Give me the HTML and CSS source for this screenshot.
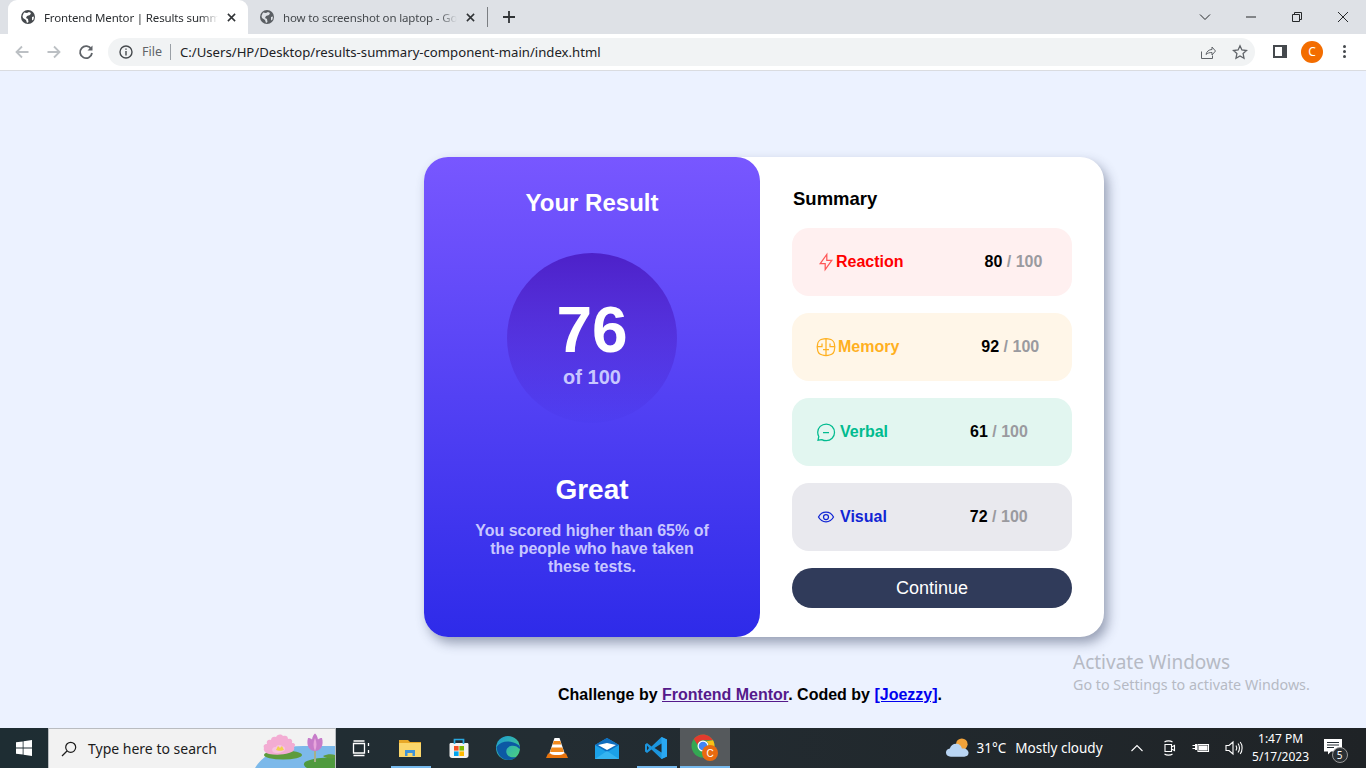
FILE: index.html
```html
<!DOCTYPE html>
<html lang="en">
<head>
  <meta charset="UTF-8" />
  <title>Frontend Mentor | Results summary component</title>
  <link rel="stylesheet" href="styles.css">
</head>
<body>
  <header class="chrome">
    <div class="tabstrip">
      <div class="tab tab-active">
        <svg class="globe" viewBox="0 0 16 16"><circle cx="8" cy="8" r="7" fill="#45494d"/><path d="M4 3.500l3 .5 2-1 2 1-1 2-3 1-1 2 2 1 .5 3-1.500 1-1-3-3-2-.5-2zM12 8l2-.5-.5 3-1.500 1z" fill="#fff"/></svg>
        <span class="tab-title">Frontend Mentor | Results summary</span>
        <svg class="tab-x" viewBox="0 0 10 10"><path d="M1 1l8 8M9 1l-8 8"/></svg>
      </div>
      <div class="tab">
        <svg class="globe" viewBox="0 0 16 16"><circle cx="8" cy="8" r="7" fill="#5a5e63"/><path d="M4 3.500l3 .5 2-1 2 1-1 2-3 1-1 2 2 1 .5 3-1.500 1-1-3-3-2-.5-2zM12 8l2-.5-.5 3-1.500 1z" fill="#dee1e6"/></svg>
        <span class="tab-title">how to screenshot on laptop - Google</span>
        <svg class="tab-x" viewBox="0 0 10 10"><path d="M1 1l8 8M9 1l-8 8"/></svg>
      </div>
      <span class="tab-sep"></span>
      <svg class="new-tab" viewBox="0 0 12 12"><path d="M6 0v12M0 6h12"/></svg>
      <div class="win-controls">
        <svg viewBox="0 0 12 12"><path d="M1 3.500l5 5 5-5"/></svg>
        <svg viewBox="0 0 12 12"><path d="M1 6h10"/></svg>
        <svg viewBox="0 0 12 12"><path d="M1.500 3.500h7v7h-7zM3.500 3.500v-2h7v7h-2"/></svg>
        <svg viewBox="0 0 12 12"><path d="M1 1l10 10M11 1l-10 10"/></svg>
      </div>
    </div>
    <div class="toolbar">
      <svg class="nav-icon nav-off" viewBox="0 0 16 16"><path d="M14.500 8h-12M8 2.500L2.500 8 8 13.500"/></svg>
      <svg class="nav-icon nav-off" viewBox="0 0 16 16"><path d="M1.500 8h12M8 2.500L13.500 8 8 13.500"/></svg>
      <svg class="nav-icon" viewBox="0 0 16 16"><path d="M13.300 5.200A6 6 0 1 0 14 9"/><path class="solid" d="M14.500 1.500v5h-5z"/></svg>
      <div class="omnibox">
        <svg class="info" viewBox="0 0 14 14"><circle cx="7" cy="7" r="6"/><path d="M7 6v4.500M7 3.500v1.300"/></svg>
        <span class="file-label">File</span>
        <span class="omni-sep"></span>
        <span class="url">C:/Users/HP/Desktop/results-summary-component-main/index.html</span>
        <svg class="omni-icon share" viewBox="0 0 16 16"><path d="M1.500 7.500v7h11v-3M6 10.500c.5-3 3-5 6-5V3l3.500 4-3.500 4V8.500c-2.500 0-4.500.5-6 2z"/></svg>
        <svg class="omni-icon star" viewBox="0 0 16 16"><path d="M8 1.800l1.900 4.200 4.600.5-3.400 3.100.9 4.600L8 11.900l-4 2.300.9-4.600L1.500 6.500 6.100 6z"/></svg>
      </div>
      <span class="side-panel"></span>
      <span class="avatar">C</span>
      <span class="dots"><i></i><i></i><i></i></span>
    </div>
  </header>

  <main class="page">
    <section class="card">
      <div class="result">
        <h2 class="result-title">Your Result</h2>
        <div class="score-circle">
          <span class="score-num">76</span>
          <span class="score-of">of 100</span>
        </div>
        <h1 class="grade">Great</h1>
        <p class="blurb">You scored higher than 65% of the people who have taken these tests.</p>
      </div>
      <div class="summary">
        <h2 class="summary-title">Summary</h2>
        <div class="row row-reaction">
          <span class="cat">
            <svg viewBox="0 0 20 20"><path d="M10.800 8.300V2.500l-6.600 9.200h5v5.800l6.600-9.200z"/></svg>
            <span>Reaction</span>
          </span>
          <span class="val">80 <em>/ 100</em></span>
        </div>
        <div class="row row-memory">
          <span class="cat">
            <svg viewBox="0 0 20 20"><path d="M10 2v16M6.500 2.200C3.800 2.600 1.500 5 1.500 8c-.4 1.400-.4 3 0 4 0 3.500 2.500 5.500 5 6 1.300.5 2.500.5 3.500.5s2.200 0 3.500-.5c2.500-.5 5-2.500 5-6 .4-1 .4-2.600 0-4 0-3-2.300-5.400-5-5.800C12.300 1.500 11 1.500 10 1.500s-2.300 0-3.500.7zM1.600 9.500h4.400V6.500M18.400 9.500H14V6.500M10 12.500H7M10 12.500h3"/></svg>
            <span>Memory</span>
          </span>
          <span class="val">92 <em>/ 100</em></span>
        </div>
        <div class="row row-verbal">
          <span class="cat">
            <svg viewBox="0 0 20 20"><path d="M7 10.500h6M10.300 2C5.500 2 1.700 5.700 1.700 10.300c0 1.500.4 3 1.100 4.200l-.8 3.700 3.800-.6c1.300.7 2.900 1.100 4.500 1.100 4.600 0 8.200-3.700 8.200-8.300S14.900 2 10.300 2z"/></svg>
            <span>Verbal</span>
          </span>
          <span class="val">61 <em>/ 100</em></span>
        </div>
        <div class="row row-visual">
          <span class="cat">
            <svg viewBox="0 0 20 20"><path d="M2.500 10c1.700-3.200 4.300-4.800 7.500-4.800s5.800 1.600 7.500 4.800c-1.700 3.200-4.300 4.800-7.500 4.800S4.200 13.200 2.500 10z"/><circle cx="10" cy="10" r="2.500"/></svg>
            <span>Visual</span>
          </span>
          <span class="val">72 <em>/ 100</em></span>
        </div>
        <button class="continue">Continue</button>
      </div>
    </section>
    <footer class="attribution">
      Challenge by <a class="visited" href="#">Frontend Mentor</a>. Coded by <a href="#">[Joezzy]</a>.
    </footer>
    <div class="activate">
      <div class="activate-big">Activate Windows</div>
      <div class="activate-small">Go to Settings to activate Windows.</div>
    </div>
  </main>

  <footer class="taskbar">
    <div class="start">
      <svg viewBox="0 0 16 16"><path d="M0 2.300l6.700-.9v6.200H0zM7.500 1.300L16 0v7.600H7.500zM0 8.400h6.700v6.200L0 13.700zM7.500 8.400H16V16l-8.500-1.200z" fill="#fff"/></svg>
    </div>
    <div class="search">
      <svg class="search-icon" viewBox="0 0 16 16"><circle cx="9.700" cy="6.300" r="5"/><path d="M6 10L1 15"/></svg>
      <span class="search-text">Type here to search</span>
      <svg class="lily" viewBox="0 0 84 36">
        <path d="M4 36C12 22 30 14 52 14h32v22z" fill="#7cb9ea"/>
        <ellipse cx="32" cy="23" rx="19" ry="4.500" fill="#5e9b3c"/>
        <path d="M54 30c6-4 20-5 30-4v10H56c-3-2-4-4-2-6z" fill="#4f9a3e"/>
        <path d="M72 24c4-2 9-2 12-1v3c-5 1-10 0-12-2z" fill="#5e9b3c"/>
        <path d="M64 16v14" stroke="#a7b08a" stroke-width="2"/>
        <path d="M18 22c-4-1-6-4-5-6-1-2 0-4 3-4-1-3 1-5 4-4 0-3 3-4 5-3 2-3 5-3 7-1 3-1 5 0 5 3 3-1 5 1 4 4 3 0 4 2 2 4 1 3-1 5-5 6-6 2-14 2-20 1z" fill="#f3acd3"/>
        <path d="M22 20c-2-3 0-5 3-5 0-2 5-3 6-1 3 0 4 3 2 5-3 2-8 3-11 1z" fill="#f7c4e0"/>
        <path d="M25 18l2-4 2 2 2-2 2 4c-2 1-6 1-8 0z" fill="#f1d14f"/>
        <path d="M64 19c-6 0-9-6-7-13 2 0 3 .5 4 1.500 .5-3 2-5.500 3-6 1 .5 2.500 3 3 6 1-1 2-1.500 4-1.500 2 7-1 13-7 13z" fill="#c77cc9"/>
        <path d="M64 19c-2-4-2-9 0-13 2 4 2 9 0 13z" fill="#e8a6dc"/>
      </svg>
    </div>
    <div class="task-icons">
      <div class="task">
        <svg class="task-view" viewBox="0 0 24 24"><path d="M4.500 5h11M4.500 19.500h11M4.500 7.500h11v9.500h-11zM19.500 7v3M19.500 14v3"/></svg>
      </div>
      <div class="task task-open">
        <svg viewBox="0 0 24 24"><path d="M1 4h9l2 2h11v3H1z" fill="#e8a828"/><path d="M1 7h22v14H1z" fill="#fbd66b"/><path d="M7 20v-6h10v6h-2.500v-3h-5v3z" fill="#3f93d8"/></svg>
      </div>
      <div class="task">
        <svg viewBox="0 0 24 24"><path d="M4 7h16c1 0 1.500.5 1.500 1.500v11c0 1.500-1 2.500-2.500 2.500H5c-1.500 0-2.500-1-2.500-2.500v-11C2.500 7.500 3 7 4 7z" fill="#f2f2f2"/><path d="M7.500 8V3.500h9V8" fill="none" stroke="#2aa8e0" stroke-width="1.700"/><path d="M7 10h4.600v4.600H7z" fill="#f25022"/><path d="M12.400 10H17v4.600h-4.600z" fill="#7fba00"/><path d="M7 15.400h4.600V20H7z" fill="#00a4ef"/><path d="M12.400 15.400H17V20h-4.600z" fill="#ffb900"/></svg>
      </div>
      <div class="task">
        <svg viewBox="0 0 24 24"><defs><linearGradient id="edgeTop" x1="0" y1="0" x2="1" y2="1"><stop offset="0" stop-color="#1a9ad8"/><stop offset="1" stop-color="#4fd37a"/></linearGradient></defs><circle cx="12" cy="12" r="12" fill="url(#edgeTop)"/><path d="M.5 11c.5 7 5 13 12 13 3 0 6-1 8-3-4 1-9 0-10-4-1-3 1-6 4-7 3-1 7 0 9 3 1-1 .5-3-1-4-7-5-17-5-22 2z" fill="#0c59a4"/></svg>
      </div>
      <div class="task">
        <svg viewBox="0 0 24 24"><path d="M9.500 2h5l6 18h-17z" fill="#fff"/><path d="M8.700 5h6.600l1 3.500H7.700zM6.500 11.500h11l1.300 4.500H5.200z" fill="#f18a1e"/><path d="M3 17.500h2.500c1 2 12 2 13 0H21l2 4.500H1z" fill="#e8730c"/></svg>
      </div>
      <div class="task">
        <svg viewBox="0 0 24 24"><path d="M0 9l12-7 12 7v14H0z" fill="#1ba1e8"/><path d="M0 9l12-7 12 7-12 7z" fill="#0f6cbd"/><path d="M3 9l9-2 9 2-9 5z" fill="#fff"/><path d="M0 23l12-8 12 8z" fill="#35b4f0"/></svg>
      </div>
      <div class="task task-open">
        <svg viewBox="0 0 24 24"><path d="M17.500 1L7.500 10.500 3 7 1 8.500v7L3 17l4.500-3.500 10 9.500L23 20.500v-17z" fill="#1c95dd"/><path d="M17.500 1L23 3.500v17L17.500 23z" fill="#2aa8f2"/><path d="M17.500 7.500L10.500 12l7 4.500z" fill="#202a30"/><path d="M3 9.500L5 12l-2 2.500z" fill="#202a30"/></svg>
      </div>
      <div class="task task-active">
        <svg viewBox="0 0 28 28"><circle cx="12" cy="12" r="11.500" fill="#34a853"/><path d="M12 .5c4.300 0 8 2.400 10 5.800H12c-2.800 0-5 2-5.500 4.500L2.800 5C5 2.200 8.300.5 12 .5z" fill="#e33b2e"/><path d="M22 6.300c1 1.700 1.500 3.600 1.500 5.700 0 6.300-5 11.400-11.300 11.500l4.300-7.500c.8-1 1.200-2.400 1.200-4 0-2-.9-3.700-2.300-4.700z" fill="#fbc116"/><circle cx="12" cy="12" r="5.500" fill="#fff"/><circle cx="12" cy="12" r="4.300" fill="#4285f4"/><circle cx="19" cy="19" r="8" fill="#e86a10"/><text class="badge-c" x="19" y="22.500" text-anchor="middle">C</text></svg>
      </div>
    </div>
    <div class="tray">
      <svg class="weather" viewBox="0 0 26 24"><circle cx="17.500" cy="8" r="6" fill="#f2a33a"/><path d="M6 21c-3 0-5-1.800-5-4.300 0-2.300 1.800-4 4-4.200C6 9.500 8.500 7.500 11.500 7.500c3.200 0 5.700 2.200 6 5 .5 0 1-.1 1.500-.1 3 0 5.500 1.900 5.500 4.600S22.500 21 20 21z" fill="#b9d5f3"/></svg>
      <span class="temp">31°C</span>
      <span class="forecast">Mostly cloudy</span>
      <svg class="tray-icon caret" viewBox="0 0 14 14"><path d="M1.500 10L7 4.500 12.500 10"/></svg>
      <svg class="tray-icon meet" viewBox="0 0 16 16"><path d="M4 4.500h6.500v7H4zM10.500 7l3-1.500v5L10.500 9M3.500 2c2-1.500 6-1.500 8 0M3.500 14c2 1.500 6 1.500 8 0"/></svg>
      <svg class="tray-icon power" viewBox="0 0 18 14"><path d="M6 3.500h10.500v7H6zM.5 4.500h2.500M.5 7.500h2.500"/><path class="solid" d="M7 4.500h8.500v5H7zM3 3h2v6H3z"/></svg>
      <svg class="tray-icon volume" viewBox="0 0 18 16"><path d="M1 5.500h3l4-3.500v12l-4-3.500H1zM11 5.500c1 1.500 1 3.500 0 5M13 3.500c2 2.500 2 6.500 0 9M15.200 2c2.500 3 2.500 9 0 12"/></svg>
      <div class="clock"><span>1:47 PM</span><span>5/17/2023</span></div>
      <div class="notify">
        <svg viewBox="0 0 18 16"><path d="M0 0h18v12.500H7L4 15.500v-3H0z" fill="#fff"/><path d="M3 3.500h12M3 6h12M3 8.500h7" stroke="#222b31"/></svg>
        <span class="notify-count">5</span>
      </div>
    </div>
  </footer>
</body>
</html>
```

FILE: styles.css
```css
* {
  box-sizing: border-box;
}
html, body {
  margin: 0;
  height: 100%;
}
body {
  display: flex;
  flex-direction: column;
  height: 768px;
  overflow: hidden;
  background: #ecf2ff;
  font-family: "Liberation Sans", Arial, sans-serif;
}

/* browser frame */
.chrome {
  font-family: "Noto Sans", "Open Sans", sans-serif;
  color: #202124;
}
.tabstrip {
  display: flex;
  align-items: center;
  height: 34px;
  padding-left: 8px;
  background: #dee1e6;
}
.tab {
  display: flex;
  align-items: center;
  width: 240px;
  height: 34px;
  padding: 0 12px;
  font-size: 11.500px;
  letter-spacing: -0.15px;
  color: #45494d;
}
.tab + .tab {
  margin-left: -1px;
}
.tab-active {
  background: #fff;
  border-radius: 9px 9px 0 0;
  color: #2b2e31;
}
.globe {
  width: 16px;
  height: 16px;
  flex: none;
}
.tab-title {
  flex: 1;
  margin: 0 9px 0 8px;
  overflow: hidden;
  white-space: nowrap;
  -webkit-mask-image: linear-gradient(to right, #000 90%, transparent);
  mask-image: linear-gradient(to right, #000 90%, transparent);
}
.tab-x {
  width: 9px;
  height: 9px;
  flex: none;
  fill: none;
  stroke: #303336;
  stroke-width: 1.700;
}
.tab-sep {
  width: 1px;
  height: 20px;
  background: #7b7e82;
}
.new-tab {
  width: 12px;
  height: 12px;
  margin-left: 15px;
  fill: none;
  stroke: #303336;
  stroke-width: 1.800;
}
.win-controls {
  display: flex;
  align-items: center;
  gap: 34px;
  margin-left: auto;
  padding-right: 17px;
}
.win-controls svg {
  width: 12px;
  height: 12px;
  fill: none;
  stroke: #26282a;
  stroke-width: 1;
}
.toolbar {
  display: flex;
  align-items: center;
  height: 37px;
  padding: 0 0 1px 14px;
  background: #fff;
  border-bottom: 1px solid #dadce0;
}
.nav-icon {
  width: 16px;
  height: 16px;
  margin-right: 16px;
  fill: none;
  stroke: #5f6368;
  stroke-width: 1.800;
}
.nav-icon .solid {
  fill: #5f6368;
  stroke: none;
}
.nav-off {
  stroke: #bcc0c4;
}
.omnibox {
  display: flex;
  align-items: center;
  width: 1147px;
  height: 28px;
  margin-left: -2px;
  padding: 0 7px 0 11px;
  border-radius: 14px;
  background: #f1f3f4;
}
.info {
  width: 14px;
  height: 14px;
  fill: none;
  stroke: #45494d;
  stroke-width: 1.400;
}
.file-label {
  margin-left: 9px;
  font-size: 12.500px;
  color: #5f6368;
}
.omni-sep {
  width: 1px;
  height: 16px;
  margin: 0 9px 0 8px;
  background: #9aa0a6;
}
.url {
  font-size: 13.150px;
  color: #202124;
}
.omni-icon {
  width: 16px;
  height: 16px;
  fill: none;
  stroke: #5f6368;
  stroke-width: 1.300;
}
.share {
  margin-left: auto;
  margin-right: 16px;
  stroke-width: 1;
}
.side-panel {
  width: 14px;
  height: 13px;
  margin-left: 18px;
  border: 2px solid #45494d;
  border-right-width: 5px;
}
.avatar {
  display: flex;
  align-items: center;
  justify-content: center;
  width: 22px;
  height: 22px;
  margin-left: 14px;
  border-radius: 50%;
  background: #f36d00;
  color: #fff;
  font-size: 12px;
}
.dots {
  display: flex;
  flex-direction: column;
  gap: 2px;
  margin-left: 20px;
}
.dots i {
  width: 3px;
  height: 3px;
  border-radius: 50%;
  background: #45494d;
}

/* results card */
.page {
  position: relative;
  flex: 1;
  padding: 86px 0 0 424px;
}
.card {
  display: flex;
  width: 680px;
  height: 480px;
  border-radius: 24px;
  background: #fff;
  box-shadow: 4px 6px 12px rgba(48, 59, 90, 0.45);
}
.result {
  display: flex;
  flex-direction: column;
  align-items: center;
  width: 336px;
  padding-top: 32px;
  border-radius: 24px;
  background: linear-gradient(to bottom, #7857ff, #2e2be9);
  color: #fff;
  text-align: center;
}
.result-title {
  margin: 0;
  font-size: 24px;
  line-height: 28px;
}
.score-circle {
  display: flex;
  flex-direction: column;
  align-items: center;
  width: 170px;
  height: 170px;
  margin-top: 36px;
  padding-top: 43px;
  border-radius: 50%;
  background: linear-gradient(to bottom, #4d21c9, rgba(37, 33, 201, 0.04));
}
.score-num {
  font-size: 64px;
  font-weight: bold;
  line-height: 68px;
}
.score-of {
  margin-top: 1px;
  font-size: 20px;
  font-weight: bold;
  line-height: 24px;
  color: #c8c7ff;
}
.grade {
  margin: 51px 0 0;
  font-size: 28px;
  line-height: 32px;
}
.blurb {
  width: 240px;
  margin: 16px 0 0;
  font-size: 16px;
  font-weight: bold;
  line-height: 18px;
  color: #c8c7ff;
}
.summary {
  flex: 1;
  padding: 31px 32px 0;
}
.summary-title {
  margin: 0 0 18px;
  padding-left: 1px;
  font-size: 18.500px;
  line-height: 22px;
  color: #000;
}
.row {
  display: flex;
  align-items: center;
  gap: 82px;
  height: 68px;
  margin-bottom: 17px;
  padding-left: 24px;
  border-radius: 17px;
  font-size: 16px;
  font-weight: bold;
}
.cat {
  display: flex;
  align-items: center;
}
.cat svg {
  width: 20px;
  height: 20px;
  fill: none;
  stroke: currentColor;
  stroke-width: 1.250;
}
.val {
  color: #000;
}
.val em {
  font-style: normal;
  color: #9a9a9f;
}
.row-reaction {
  gap: 81px;
  background: #fff0f0;
  color: #ff0000;
}
.row-reaction svg {
  stroke: #ff5757;
}
.row-memory {
  background: #fff6e8;
  color: #ffb01f;
}
.row-memory .cat {
  gap: 2px;
}
.row-verbal {
  background: #e2f6f0;
  color: #00bb8f;
}
.row-verbal .cat,
.row-visual .cat {
  gap: 4px;
}
.row-visual {
  gap: 83px;
  background: #e9e9ee;
  color: #1125d4;
}
.continue {
  display: block;
  width: 280px;
  height: 40px;
  padding: 0;
  border: none;
  border-radius: 20px;
  background: #303b5a;
  color: #fff;
  font-family: "Liberation Sans", Arial, sans-serif;
  font-size: 18px;
}
.attribution {
  width: 680px;
  margin-top: 49px;
  padding-right: 28px;
  font-size: 16px;
  font-weight: bold;
  line-height: 18px;
  text-align: center;
  color: #000;
}
.attribution a {
  color: #0000ee;
}
.attribution a.visited {
  color: #551a8b;
}
.activate {
  position: absolute;
  left: 1073px;
  top: 579px;
  font-family: "Noto Sans", "Open Sans", sans-serif;
  color: #b6bac4;
}
.activate-big {
  font-size: 19px;
  line-height: 24px;
}
.activate-small {
  font-size: 14.300px;
  line-height: 22px;
}

/* windows taskbar */
.taskbar {
  display: flex;
  align-items: stretch;
  height: 40px;
  background: linear-gradient(to right, #1e2d33, #232d33 40%, #1f2326);
  color: #fff;
  font-family: "Noto Sans", "Open Sans", sans-serif;
}
.start {
  display: flex;
  align-items: center;
  justify-content: center;
  width: 48px;
}
.start svg {
  width: 16px;
  height: 16px;
}
.search {
  display: flex;
  align-items: center;
  width: 288px;
  padding-left: 12px;
  background: #f2f2f2;
  border: 1px solid #b9bcc0;
  border-bottom: none;
  color: #1c1c1c;
  position: relative;
  overflow: hidden;
}
.search-icon {
  width: 16px;
  height: 16px;
  fill: none;
  stroke: #1c1c1c;
  stroke-width: 1.200;
}
.search-text {
  margin-left: 11px;
  font-size: 14px;
}
.lily {
  position: absolute;
  right: 0;
  bottom: 0;
  width: 84px;
  height: 36px;
}
.task-icons {
  display: flex;
}
.task {
  position: relative;
  display: flex;
  align-items: center;
  justify-content: center;
  width: 49.200px;
}
.task svg {
  width: 24px;
  height: 24px;
}
.task-view {
  fill: none;
  stroke: #fff;
  stroke-width: 1.300;
}
.task-open::after {
  content: "";
  position: absolute;
  left: 6px;
  right: 3px;
  bottom: 0;
  height: 2px;
  background: #76b9ed;
}
.task-active {
  background: #55595c;
}
.task-active svg {
  width: 28px;
  height: 28px;
}
.task-active::after {
  content: "";
  position: absolute;
  left: 0;
  right: 0;
  bottom: 0;
  height: 2px;
  background: #76b9ed;
}
.badge-c {
  font-family: "Liberation Sans", sans-serif;
  font-size: 10px;
  fill: #fff;
}
.tray {
  display: flex;
  align-items: center;
  flex: 1;
  padding-left: 215px;
  font-size: 13.500px;
}
.weather {
  width: 25px;
  height: 24px;
  flex: none;
}
.temp {
  margin-left: 7px;
}
.forecast {
  margin-left: 9px;
  white-space: nowrap;
}
.tray-icon {
  height: 16px;
  flex: none;
  fill: none;
  stroke: #fff;
  stroke-width: 1.100;
}
.tray-icon .solid {
  fill: #fff;
  stroke: none;
}
.caret {
  width: 14px;
  margin-left: 27px;
}
.meet {
  width: 16px;
  margin-left: 17px;
}
.power {
  width: 18px;
  margin-left: 15px;
}
.volume {
  width: 18px;
  margin-left: 15px;
}
.clock {
  display: flex;
  flex-direction: column;
  align-items: center;
  width: 56px;
  margin-left: 10px;
  font-size: 12px;
  line-height: 18px;
  white-space: nowrap;
}
.notify {
  position: relative;
  margin: 6px 0 0 15px;
  width: 24px;
  height: 24px;
}
.notify svg {
  display: block;
  width: 18px;
  height: 16px;
}
.notify-count {
  position: absolute;
  right: 0;
  bottom: 0;
  display: flex;
  align-items: center;
  justify-content: center;
  width: 16px;
  height: 16px;
  border: 1px solid #9a9a9a;
  border-radius: 50%;
  background: #2b3034;
  font-size: 10px;
}
```
